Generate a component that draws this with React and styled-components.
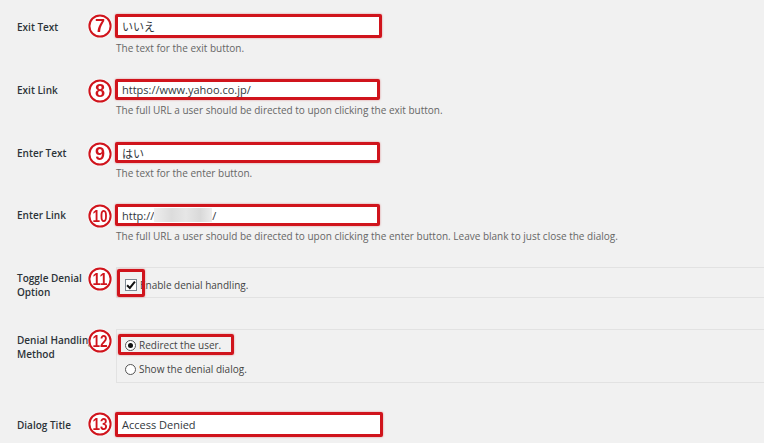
import React from "react";
import styled, { createGlobalStyle } from "styled-components";

const GlobalStyle = createGlobalStyle`
    html, body {
        margin: 0;
        padding: 0;
        background: #f1f1f1;
    }
    body {
        font-family: "Open Sans", "Noto Sans CJK JP", sans-serif;
        color: #23282d;
    }
`;

const RED = "#d0141c";

const CircleNum = ({ n }) => {
    const two = String(n).length > 1;
    return (
        <Marker>
            <svg width="24" height="24" viewBox="0 0 24 24">
                <circle cx="12" cy="12" r="10.6" fill="#fff" stroke={RED} strokeWidth="2" />
                <text
                    x="12"
                    y="18.4"
                    textAnchor="middle"
                    fontFamily="Liberation Sans, sans-serif"
                    fontWeight="700"
                    fontSize={two ? 17 : 18}
                    fill={RED}
                    textLength={two ? 15 : undefined}
                    lengthAdjust="spacingAndGlyphs"
                >
                    {n}
                </text>
            </svg>
        </Marker>
    );
};

const App = () => {
    return (
        <>
            <GlobalStyle />
            <Page>
                <Row h={65}>
                    <Label top={6}>Exit Text</Label>
                    <CircleNum n={7} />
                    <Field>
                        <TextBox h={24} w={267}>いいえ</TextBox>
                        <Desc>The text for the exit button.</Desc>
                    </Field>
                </Row>

                <Row h={63}>
                    <Label top={4}>Exit Link</Label>
                    <CircleNum n={8} />
                    <Field>
                        <TextBox h={21} w={265}>https://www.yahoo.co.jp/</TextBox>
                        <Desc>The full URL a user should be directed to upon clicking the exit button.</Desc>
                    </Field>
                </Row>

                <Row h={62}>
                    <Label top={4}>Enter Text</Label>
                    <CircleNum n={9} />
                    <Field>
                        <TextBox h={21} w={265}>はい</TextBox>
                        <Desc>The text for the enter button.</Desc>
                    </Field>
                </Row>

                <Row h={63}>
                    <Label top={4}>Enter Link</Label>
                    <CircleNum n={10} />
                    <Field>
                        <TextBox h={22} w={265}>
                            http://<Blurred />/
                        </TextBox>
                        <Desc>
                            The full URL a user should be directed to upon clicking the enter button. Leave blank to just close the dialog.
                        </Desc>
                    </Field>
                </Row>

                <Row h={62}>
                    <Label top={4}>
                        Toggle Denial
                        <br />
                        Option
                    </Label>
                    <CircleNum n={11} />
                    <OptionBox h={31} top={11}>
                        <Choice>
                            <Checkbox>
                                <svg width="11" height="10" viewBox="0 0 11 10">
                                    <path d="M1.2 5.2 L4.2 8.2 L9.8 1.4" fill="none" stroke="#111" strokeWidth="2.2" />
                                </svg>
                            </Checkbox>
                            <ChoiceText>Enable denial handling.</ChoiceText>
                            <Highlight style={{ left: -8, top: -9, width: 28, height: 28 }} />
                        </Choice>
                    </OptionBox>
                </Row>

                <Row h={83}>
                    <Label top={4}>
                        Denial Handling
                        <br />
                        Method
                    </Label>
                    <CircleNum n={12} />
                    <OptionBox h={54} top={9}>
                        <Choice>
                            <Radio checked />
                            <ChoiceText>Redirect the user.</ChoiceText>
                            <Highlight style={{ left: -7, top: -4, width: 116, height: 21 }} />
                        </Choice>
                        <Choice>
                            <Radio />
                            <ChoiceText>Show the denial dialog.</ChoiceText>
                        </Choice>
                    </OptionBox>
                </Row>

                <Row h={31}>
                    <Label top={6}>Dialog Title</Label>
                    <CircleNum n={13} />
                    <Field>
                        <TextBox h={25} w={268}>Access Denied</TextBox>
                    </Field>
                </Row>
            </Page>
        </>
    );
};

export default App;

const Page = styled.div`
    width: 764px;
    height: 443px;
    overflow: hidden;
    padding: 14px 0 0 17px;
    box-sizing: border-box;
    display: flex;
    flex-direction: column;
`;

const Row = styled.div`
    display: flex;
    align-items: flex-start;
    height: ${(p) => p.h}px;
    flex-shrink: 0;
`;

const Label = styled.div`
    width: 71px;
    flex-shrink: 0;
    padding-top: ${(p) => p.top}px;
    font-size: 10px;
    font-weight: 600;
    line-height: 14px;
    color: #2c3338;
    white-space: nowrap;
    position: relative;
    z-index: 0;
`;

const Marker = styled.div`
    width: 24px;
    height: 24px;
    flex-shrink: 0;
    margin-right: 3px;
    position: relative;
    z-index: 1;
    filter: drop-shadow(0 0 1px #fff);
    & > svg {
        display: block;
    }
`;

const Field = styled.div`
    display: flex;
    flex-direction: column;
`;

const TextBox = styled.div`
    width: ${(p) => p.w}px;
    height: ${(p) => p.h}px;
    box-sizing: border-box;
    border: 3px solid ${RED};
    border-radius: 2px;
    box-shadow: 0 0 2px rgba(208, 20, 28, 0.5);
    background: #fff;
    display: flex;
    align-items: center;
    padding-left: 4px;
    font-size: 11px;
    color: #32373c;
`;

const Blurred = styled.span`
    display: inline-block;
    width: 58px;
    height: 14px;
    background: linear-gradient(90deg, #eee 0%, #dcdcdc 30%, #e6e6e6 55%, #d9d9d9 80%, #ececec 100%);
`;

const Desc = styled.div`
    margin-top: 3px;
    padding-left: 1px;
    font-size: 10px;
    line-height: 14px;
    color: #666;
    white-space: nowrap;
`;

const OptionBox = styled.div`
    flex: 1;
    height: ${(p) => p.h}px;
    margin-left: 1px;
    box-sizing: border-box;
    border: 1px solid #e2e2e2;
    border-right: none;
    display: flex;
    flex-direction: column;
    align-items: flex-start;
    gap: 10px;
    padding: ${(p) => p.top - 1}px 0 0 8px;
`;

const Choice = styled.label`
    position: relative;
    display: flex;
    align-items: center;
    gap: 3px;
    height: 14px;
`;

const Checkbox = styled.span`
    width: 12px;
    height: 12px;
    box-sizing: border-box;
    border: 1px solid #7e8993;
    background: #fff;
    display: flex;
    align-items: center;
    justify-content: center;
`;

const Radio = styled.span`
    width: 11px;
    height: 11px;
    box-sizing: border-box;
    border-radius: 50%;
    border: 1px solid #555;
    background: #fff;
    display: flex;
    align-items: center;
    justify-content: center;
    &::after {
        content: "";
        width: 5px;
        height: 5px;
        border-radius: 50%;
        background: ${(p) => (p.checked ? "#111" : "transparent")};
    }
`;

const ChoiceText = styled.span`
    font-size: 10px;
    line-height: 14px;
    color: #444;
    white-space: nowrap;
`;

const Highlight = styled.span`
    position: absolute;
    box-sizing: border-box;
    border: 3px solid ${RED};
    border-radius: 2px;
    box-shadow: 0 0 2px rgba(208, 20, 28, 0.5);
    pointer-events: none;
`;
